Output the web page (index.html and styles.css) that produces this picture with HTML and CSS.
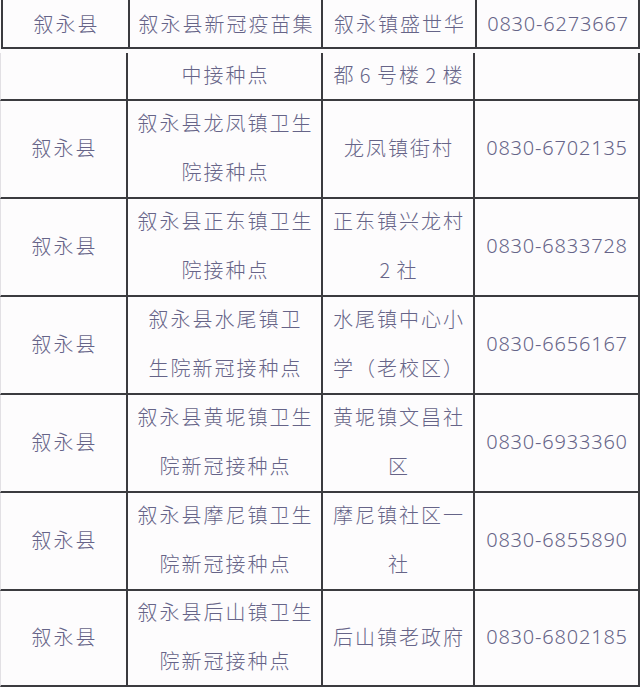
FILE: index.html
```html
<!DOCTYPE html>
<html lang="zh-CN">
<head>
<meta charset="utf-8">
<title>叙永县新冠疫苗接种点</title>
<link rel="stylesheet" href="styles.css">
</head>
<body>
<div class="page">
  <div class="sheet sheet-top">
    <div class="row row-top">
      <div class="cell c1"><span class="txt">叙永县</span></div>
      <div class="cell c2"><span class="txt">叙永县新冠疫苗集</span></div>
      <div class="cell c3"><span class="txt">叙永镇盛世华</span></div>
      <div class="cell c4"><span class="num">0830-6273667</span></div>
    </div>
  </div>
  <div class="sheet sheet-main">
    <div class="row row-first">
      <div class="cell c1"></div>
      <div class="cell c2"><span class="txt">中接种点</span></div>
      <div class="cell c3"><span class="txt tight">都 6 号楼 2 楼</span></div>
      <div class="cell c4"></div>
    </div>
    <div class="row">
      <div class="cell c1"><span class="txt">叙永县</span></div>
      <div class="cell c2"><span class="txt">叙永县龙凤镇卫生<br>院接种点</span></div>
      <div class="cell c3"><span class="txt">龙凤镇街村</span></div>
      <div class="cell c4"><span class="num">0830-6702135</span></div>
    </div>
    <div class="row">
      <div class="cell c1"><span class="txt">叙永县</span></div>
      <div class="cell c2"><span class="txt">叙永县正东镇卫生<br>院接种点</span></div>
      <div class="cell c3"><span class="txt tight">正东镇兴龙村<br>2 社</span></div>
      <div class="cell c4"><span class="num">0830-6833728</span></div>
    </div>
    <div class="row">
      <div class="cell c1"><span class="txt">叙永县</span></div>
      <div class="cell c2"><span class="txt">叙永县水尾镇卫<br>生院新冠接种点</span></div>
      <div class="cell c3"><span class="txt">水尾镇中心小<br>学（老校区）</span></div>
      <div class="cell c4"><span class="num">0830-6656167</span></div>
    </div>
    <div class="row">
      <div class="cell c1"><span class="txt">叙永县</span></div>
      <div class="cell c2"><span class="txt">叙永县黄坭镇卫生<br>院新冠接种点</span></div>
      <div class="cell c3"><span class="txt">黄坭镇文昌社<br>区</span></div>
      <div class="cell c4"><span class="num">0830-6933360</span></div>
    </div>
    <div class="row">
      <div class="cell c1"><span class="txt">叙永县</span></div>
      <div class="cell c2"><span class="txt">叙永县摩尼镇卫生<br>院新冠接种点</span></div>
      <div class="cell c3"><span class="txt">摩尼镇社区一<br>社</span></div>
      <div class="cell c4"><span class="num">0830-6855890</span></div>
    </div>
    <div class="row row-last">
      <div class="cell c1"><span class="txt">叙永县</span></div>
      <div class="cell c2"><span class="txt">叙永县后山镇卫生<br>院新冠接种点</span></div>
      <div class="cell c3"><span class="txt">后山镇老政府</span></div>
      <div class="cell c4"><span class="num">0830-6802185</span></div>
    </div>
  </div>
</div>
</body>
</html>
```
FILE: styles.css
```css
html, body {
  margin: 0;
  padding: 0;
  background: #fdfcfd;
}

.page {
  width: 640px;
  height: 687px;
  overflow: hidden;
  color: #666488;
  font-family: "Noto Sans CJK SC", "Noto Sans", sans-serif;
  font-weight: 300;
  font-size: 20px;
}

.row {
  display: grid;
  grid-template-rows: 98px;
}

.sheet-top .row {
  grid-template-columns: 129px 193px 154px 163px;
  grid-template-rows: 49px;
  margin-left: 1px;
}

.sheet-main {
  margin-top: 4px;
}

.sheet-main .row {
  grid-template-columns: 128px 195px 152px 165px;
}

.sheet-main .cell {
  padding-bottom: 4px;
}

.sheet-main .row-first {
  grid-template-rows: 48px;
}

.sheet-main .row-last {
  grid-template-rows: 96px;
}

.cell {
  box-sizing: border-box;
  border-right: 2px solid #3b3b3f;
  border-bottom: 2px solid #3b3b3f;
  display: flex;
  align-items: center;
  justify-content: center;
  text-align: center;
  min-width: 0;
  min-height: 0;
}

.sheet-top .c1 {
  border-left: 2px solid #3b3b3f;
}

.sheet-main .c1 {
  border-left: 1px solid #e2e0e4;
}

.txt {
  letter-spacing: 2px;
  padding-left: 2px;
  line-height: 49px;
  white-space: nowrap;
}

.tight {
  word-spacing: -2px;
}

.num {
  font-family: "Noto Sans", "Liberation Sans", sans-serif;
  font-weight: 300;
  font-size: 20px;
  color: #666488;
  letter-spacing: 0.8px;
  padding-left: 1px;
  line-height: 49px;
  white-space: nowrap;
}
```
